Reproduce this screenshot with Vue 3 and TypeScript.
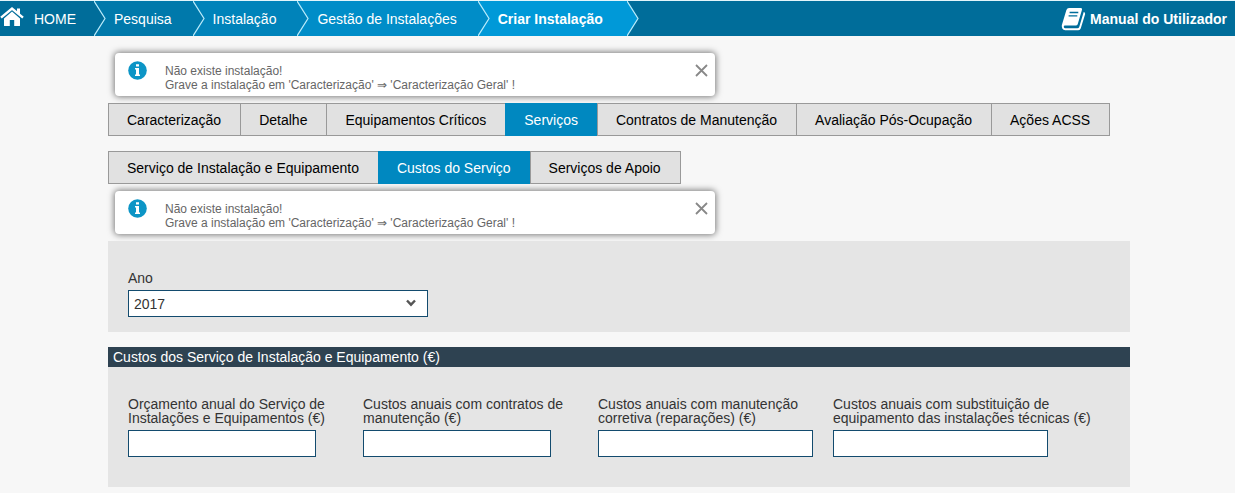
<script setup lang="ts">
import { ref } from 'vue'

interface Crumb {
  label: string
  tone: string
}

interface CostField {
  id: string
  label: string
  wide: boolean
}

const crumbs: Crumb[] = [
  { label: 'HOME', tone: 'tone-1' },
  { label: 'Pesquisa', tone: 'tone-2' },
  { label: 'Instalação', tone: 'tone-3' },
  { label: 'Gestão de Instalações', tone: 'tone-4' },
  { label: 'Criar Instalação', tone: 'tone-5' },
]

const mainTabs = [
  'Caracterização',
  'Detalhe',
  'Equipamentos Críticos',
  'Serviços',
  'Contratos de Manutenção',
  'Avaliação Pós-Ocupação',
  'Ações ACSS',
]
const subTabs = ['Serviço de Instalação e Equipamento', 'Custos do Serviço', 'Serviços de Apoio']

const tabRows = ref([
  { id: 'main', tabs: mainTabs, active: 'Serviços', notice: true },
  { id: 'sub', tabs: subTabs, active: 'Custos do Serviço', notice: true },
])

const year = ref('2017')

const fields: CostField[] = [
  { id: 'orcamento', label: 'Orçamento anual do Serviço de Instalações e Equipamentos (€)', wide: false },
  { id: 'contratos', label: 'Custos anuais com contratos de manutenção (€)', wide: false },
  { id: 'corretiva', label: 'Custos anuais com manutenção corretiva (reparações) (€)', wide: true },
  { id: 'substituicao', label: 'Custos anuais com substituição de equipamento das instalações técnicas (€)', wide: true },
]
</script>

<template>
  <div class="page">
    <header class="topbar">
      <nav class="crumbs">
        <div v-for="(c, i) in crumbs" :key="c.label" class="crumb" :class="c.tone">
          <a href="#" class="crumb-link">
            <svg v-if="i === 0" class="home-icon" width="24" height="20" viewBox="0 0 24 20" aria-hidden="true">
              <path d="M12 4.6 4 11.4V18.4Q4 19 4.7 19H9.8V13H14.2V19H19.3Q20 19 20 18.4V11.4Z" fill="#fff" />
              <path d="M1 10.6 12 1.6 23 10.6" fill="none" stroke="#fff" stroke-width="2.4" />
              <path d="M17 1.5H20V8L17 5.5Z" fill="#fff" />
            </svg>
            <span>{{ c.label }}</span>
          </a>
          <svg class="chevron" width="12" height="35" viewBox="0 0 12 35" aria-hidden="true">
            <path class="chevron-fill" d="M0 0 11 17.5 0 35Z" />
            <path class="chevron-line" d="M0 0 11 17.5 0 35" />
          </svg>
        </div>
      </nav>
      <a href="#" class="manual">
        <svg width="25" height="24" viewBox="0 0 25 24" aria-hidden="true">
          <path d="M8 1H19.8Q21.6 1 21 2.8L16.7 17.2Q16.2 18.6 14.8 18.6H3.6Q2.6 18.8 2.8 20Q3 21.2 4.4 21.2H16.3Q17.8 21.2 18.3 19.7L22.7 5Q24.6 5.6 24.1 7.3L19.8 21.3Q19.2 23.2 17.3 23.2H4.2Q.4 22.8.8 18.2L5.4 3.1Q6.2 1 8 1Z" fill="#fff" />
          <path d="M8.6 5.5H17.3M7.6 8.9H16.3" stroke="#006d9a" stroke-width="1.4" />
        </svg>
        <span>Manual do Utilizador</span>
      </a>
    </header>

    <main class="content">
      <template v-for="(row, r) in tabRows" :key="row.id">
        <div v-if="r === 0 && row.notice" class="notice" role="status">
          <svg class="info" width="19" height="19" viewBox="0 0 19 19" aria-hidden="true">
            <circle cx="9.5" cy="9.5" r="9.3" fill="#0c95c6" />
            <path d="M8 3.2H11V5.6H8ZM7 7H11V13.6H12V15H7V13.6H8V8.4H7Z" fill="#fff" />
          </svg>
          <p>Não existe instalação!<br />Grave a instalação em 'Caracterização' ⇒ 'Caracterização Geral' !</p>
          <button type="button" class="close" aria-label="Fechar" @click="row.notice = false">
            <svg width="13" height="13" viewBox="0 0 13 13"><path d="M1 1 12 12M12 1 1 12" /></svg>
          </button>
        </div>
        <div class="tabs" role="tablist">
          <button
            v-for="t in row.tabs"
            :key="t"
            type="button"
            role="tab"
            class="tab"
            :class="{ active: t === row.active }"
            :aria-selected="t === row.active"
            @click="row.active = t"
          >{{ t }}</button>
        </div>
        <div v-if="r === 1 && row.notice" class="notice" role="status">
          <svg class="info" width="19" height="19" viewBox="0 0 19 19" aria-hidden="true">
            <circle cx="9.5" cy="9.5" r="9.3" fill="#0c95c6" />
            <path d="M8 3.2H11V5.6H8ZM7 7H11V13.6H12V15H7V13.6H8V8.4H7Z" fill="#fff" />
          </svg>
          <p>Não existe instalação!<br />Grave a instalação em 'Caracterização' ⇒ 'Caracterização Geral' !</p>
          <button type="button" class="close" aria-label="Fechar" @click="row.notice = false">
            <svg width="13" height="13" viewBox="0 0 13 13"><path d="M1 1 12 12M12 1 1 12" /></svg>
          </button>
        </div>
      </template>

      <section class="panel year-panel">
        <label for="ano">Ano</label>
        <div class="select-wrap">
          <select id="ano" v-model="year">
            <option>2017</option>
            <option>2016</option>
          </select>
          <svg class="arrow" width="10" height="8" viewBox="0 0 10 8" aria-hidden="true">
            <path d="M1 1.5 5 5.7 9 1.5" fill="none" stroke="#555" stroke-width="2.4" />
          </svg>
        </div>
      </section>

      <section class="costs">
        <h2>Custos dos Serviço de Instalação e Equipamento (€)</h2>
        <div class="panel cost-grid">
          <div v-for="f in fields" :key="f.id" class="field">
            <label :for="f.id">{{ f.label }}</label>
            <input :id="f.id" type="text" :class="{ wide: f.wide }" />
          </div>
        </div>
      </section>
    </main>
  </div>
</template>

<style>
body {
  margin: 0;
  background: #f7f7f7;
}
</style>

<style scoped>
.page {
  font-family: 'Liberation Sans', Arial, sans-serif;
  font-size: 14px;
  line-height: 14px;
  color: #333;
}
.page * {
  box-sizing: border-box;
}
.topbar {
  display: flex;
  justify-content: space-between;
  border-top: 1px solid #e2f5fb;
  background: #006d9a;
}
.crumbs {
  display: flex;
}
.crumb {
  display: flex;
  height: 35px;
  background: var(--own);
}
.tone-1 { --own: #006d9a; --next: #0079ab; }
.tone-2 { --own: #0079ab; --next: #0083ba; }
.tone-3 { --own: #0083ba; --next: #008dc8; }
.tone-4 { --own: #008dc8; --next: #0099d8; }
.tone-5 { --own: #0099d8; --next: #006d9a; font-weight: bold; }
.crumb-link {
  display: flex;
  align-items: center;
  gap: 10px;
  padding: 0 21px 0 8px;
  color: #fff;
  text-decoration: none;
  white-space: nowrap;
}
.tone-1 .crumb-link {
  padding: 0 18px 0 0;
}
.tone-5 .crumb-link {
  padding-right: 24px;
}
.home-icon {
  display: block;
  margin-bottom: 4px;
}
.chevron {
  display: block;
  background: var(--next);
}
.chevron-fill {
  fill: var(--own);
}
.chevron-line {
  fill: none;
  stroke: #b9ebfb;
  stroke-width: 1.2;
}
.manual {
  display: flex;
  align-items: center;
  gap: 4px;
  padding-right: 8px;
  color: #fff;
  font-weight: bold;
  text-decoration: none;
  white-space: nowrap;
}
.content {
  padding: 17px 105px 6px 108px;
}
.notice {
  display: flex;
  align-items: flex-start;
  width: 600px;
  max-width: 100%;
  height: 43px;
  margin: 0 0 7px 7px;
  padding: 8px 7px 0 13px;
  border-radius: 4px;
  background: #fff;
  box-shadow: 0 0 6px 1px rgba(0, 0, 0, 0.5);
  font-size: 12px;
  color: #666;
}
.notice p {
  flex: 1;
  margin: 3px 0 0 18px;
}
.close {
  margin-top: 3px;
  padding: 0;
  border: 0;
  background: none;
  cursor: pointer;
}
.close svg {
  display: block;
}
.close path {
  stroke: #888;
  stroke-width: 1.8;
}
.tabs {
  display: flex;
  margin-bottom: 15px;
}
.tabs + .notice {
  margin-top: -8px;
}
.tab {
  height: 33px;
  padding: 0 19px 0 18px;
  border: 1px solid #999;
  border-right-width: 0;
  background: #e1e1e1;
  color: #000;
  font: inherit;
  white-space: nowrap;
  cursor: pointer;
}
.tab:last-child {
  border-right-width: 1px;
}
.tab.active {
  border-color: #0088c0;
  background: #0088c0;
  color: #fff;
}
.panel {
  background: #e5e5e5;
}
.year-panel {
  padding: 30px 20px 15px;
}
label {
  display: block;
  margin-bottom: 5px;
}
.select-wrap {
  position: relative;
  width: 300px;
}
select,
input {
  display: block;
  width: 100%;
  height: 27px;
  padding: 0 5px;
  border: 1px solid #134b6e;
  border-radius: 0;
  background: #fff;
  color: #333;
  font: inherit;
  appearance: none;
}
.arrow {
  position: absolute;
  top: 9px;
  right: 12px;
  pointer-events: none;
}
.costs {
  margin-top: 15px;
}
h2 {
  margin: 0;
  padding: 0 5px;
  background: #2e4251;
  color: #fff;
  font-size: 14px;
  font-weight: normal;
  line-height: 20px;
}
.cost-grid {
  display: grid;
  grid-template-columns: 235fr 235fr 235fr 290fr;
  padding: 30px 7px 30px 20px;
}
.field {
  padding-right: 20px;
}
.field input {
  width: 188px;
}
.field input.wide {
  width: 215px;
}
</style>
